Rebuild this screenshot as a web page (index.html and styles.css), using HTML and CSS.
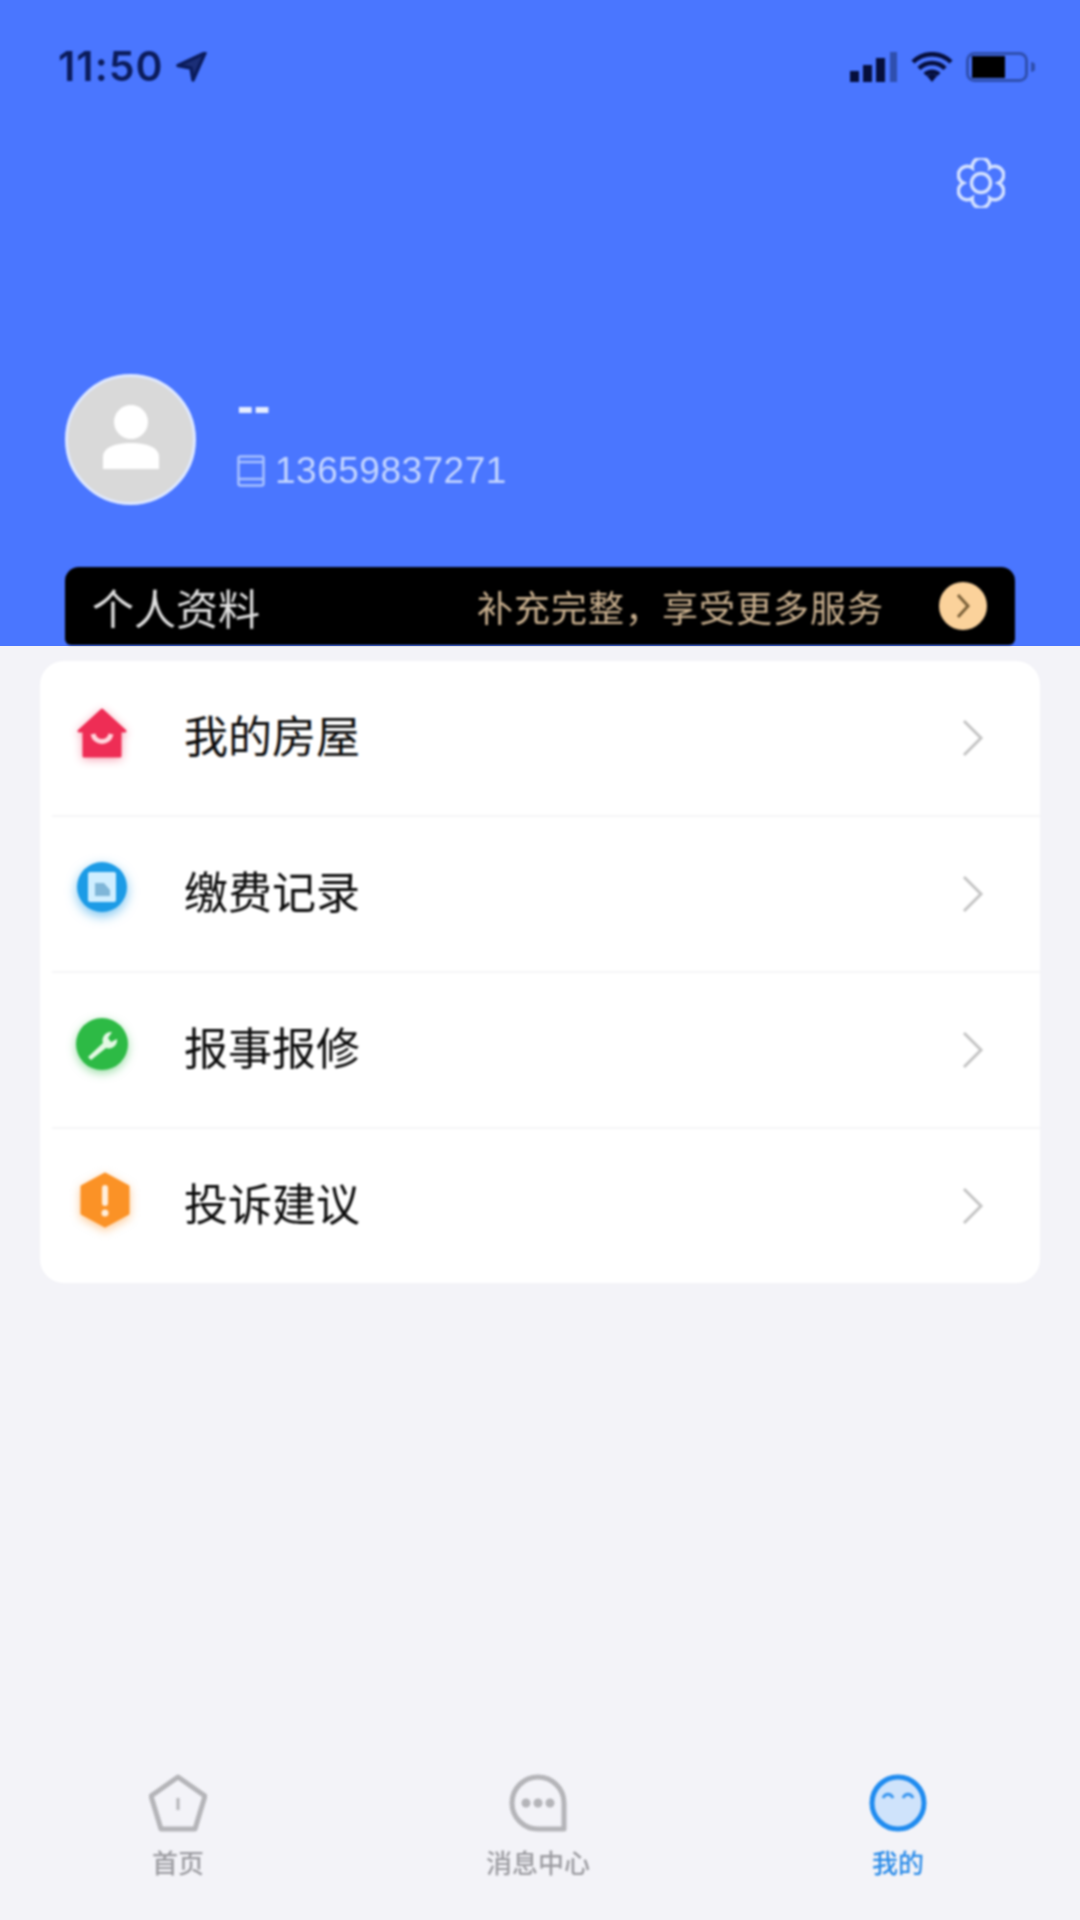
FILE: index.html
```html
<!DOCTYPE html>
<html lang="zh-CN">

<head>
    <meta charset="UTF-8">
    <title>我的</title>
    <link rel="stylesheet" href="styles.css">
</head>

<body>
    <div class="page">
        <div class="header">
            <div class="status">
                <div class="time">
                    <span>11:50</span>
                    <svg class="loc" viewBox="0 0 32 30"><path d="M30 1 3 13.500l13 2.500 2 12z" fill="#1c2f78" stroke="#0b1c5c" stroke-width="3.500" stroke-linejoin="round"/></svg>
                </div>
                <div class="status-icons">
                    <svg class="signal" viewBox="0 0 47 30">
                        <rect x="0" y="19" width="9" height="11" fill="#060f3c"/>
                        <rect x="13" y="13" width="9" height="17" fill="#060f3c"/>
                        <rect x="26" y="6" width="9" height="24" fill="#060f3c"/>
                        <rect x="40" y="0" width="7" height="30" fill="#2f4fae"/>
                    </svg>
                    <svg class="wifi" viewBox="0 0 42 30">
                        <path d="M2 10a27 27 0 0 1 38 0M8 16.500a18 18 0 0 1 26 0M14 22.500a10 10 0 0 1 14 0" fill="none" stroke="#060f3c" stroke-width="4.500"/>
                        <path d="M21 30l-5-6a7 7 0 0 1 10 0z" fill="#060f3c"/>
                    </svg>
                    <svg class="battery" viewBox="0 0 69 30">
                        <rect x="1.500" y="1.500" width="59" height="27" rx="7" fill="none" stroke="#2f4fae" stroke-width="3"/>
                        <rect x="6" y="4" width="33" height="22" fill="#000"/>
                        <path d="M65 10v10a5 5 0 0 0 0-10z" fill="#2f4fae"/>
                    </svg>
                </div>
            </div>
            <div class="tools">
                <svg class="gear" viewBox="0 0 48 50" fill="none" stroke="#d4e2ff" stroke-width="3.500">
                    <path d="M15.250 9.800A8.800 8.800 0 1 1 32.750 9.800 8.800 8.800 0 1 1 41.500 25 8.800 8.800 0 1 1 32.750 40.200 8.800 8.800 0 1 1 15.250 40.200 8.800 8.800 0 1 1 6.500 25 8.800 8.800 0 1 1 15.250 9.800z"/>
                    <circle cx="24" cy="25" r="9.500"/>
                </svg>
            </div>
            <div class="profile">
                <div class="avatar">
                    <svg class="avatar-man" viewBox="0 0 56 64">
                        <circle cx="28" cy="17" r="17" fill="#fff"/>
                        <path d="M0 64V52c0-9 11-14 28-14s28 5 28 14v12z" fill="#fff"/>
                    </svg>
                </div>
                <div class="who">
                    <div class="name">--</div>
                    <div class="phone">
                        <svg class="phone-icon" viewBox="0 0 28 32" fill="none" stroke="#a9c2ff" stroke-width="2.500">
                            <rect x="1.500" y="1.500" width="25" height="29" rx="2"/>
                            <path d="M1.500 7h25M1.500 24h25"/>
                        </svg>
                        <span>13659837271</span>
                    </div>
                </div>
            </div>
            <div class="banner">
                <span class="banner-title">个人资料</span>
                <span class="banner-tip">补充完整，享受更多服务</span>
                <span class="banner-go">
                    <svg viewBox="0 0 14 26"><path d="M2 2l10 11L2 24" fill="none" stroke="#7a6038" stroke-width="3"/></svg>
                </span>
            </div>
        </div>

        <div class="card">
            <div class="row">
                <svg class="row-icon" viewBox="0 0 60 60">
                    <path d="M30 6 7 27h5v25h36V27h5z" fill="#ee2d55" stroke="#ee2d55" stroke-width="3" stroke-linejoin="round"/>
                    <path d="M21 30c2 10 16 10 18 0" fill="none" stroke="#ffd5dc" stroke-width="5"/>
                </svg>
                <span class="row-name">我的房屋</span>
                <svg class="chevron" viewBox="0 0 22 38"><path d="M2 2l17 17L2 36" fill="none" stroke="#c4c4c4" stroke-width="3"/></svg>
            </div>
            <div class="row">
                <svg class="row-icon" viewBox="0 0 60 60">
                    <circle cx="30" cy="27" r="25" fill="#1c9be6"/>
                    <rect x="16" y="12" width="28" height="30" rx="2" fill="#cfeeff"/>
                    <path d="M23 23h9l6 7v6H23z" fill="#7fb6d8"/>
                </svg>
                <span class="row-name">缴费记录</span>
                <svg class="chevron" viewBox="0 0 22 38"><path d="M2 2l17 17L2 36" fill="none" stroke="#c4c4c4" stroke-width="3"/></svg>
            </div>
            <div class="row">
                <svg class="row-icon" viewBox="0 0 60 60">
                    <circle cx="30" cy="28" r="26" fill="#2dba45"/>
                    <path d="M16 41 31 27c-2-6 3-12 9-11l-4 6 3 4 6-3c1 6-5 11-11 9L19 44z" fill="#e4f9e4"/>
                </svg>
                <span class="row-name">报事报修</span>
                <svg class="chevron" viewBox="0 0 22 38"><path d="M2 2l17 17L2 36" fill="none" stroke="#c4c4c4" stroke-width="3"/></svg>
            </div>
            <div class="row">
                <svg class="row-icon row-icon-hex" viewBox="0 0 60 60">
                    <path d="M30 2 53 14.500v27L30 54 7 41.500v-27z" fill="#fb9226" stroke="#fb9226" stroke-width="3" stroke-linejoin="round"/>
                    <rect x="27" y="13" width="6" height="21" rx="3" fill="#ffeeda"/>
                    <circle cx="30" cy="41" r="3.500" fill="#ffeeda"/>
                </svg>
                <span class="row-name">投诉建议</span>
                <svg class="chevron" viewBox="0 0 22 38"><path d="M2 2l17 17L2 36" fill="none" stroke="#c4c4c4" stroke-width="3"/></svg>
            </div>
        </div>

        <div class="tabbar">
            <div class="tab">
                <svg class="tab-icon" viewBox="0 0 58 58" fill="none" stroke="#b4b4b8" stroke-width="5" stroke-linejoin="round">
                    <path d="M29 3 56 22 46 55H12L2 22z"/>
                    <path d="M29 24v12" stroke-width="3"/>
                </svg>
                <span>首页</span>
            </div>
            <div class="tab">
                <svg class="tab-icon" viewBox="0 0 58 58">
                    <path d="M29 3A26 26 0 0 1 55 29V55H29A26 26 0 0 1 29 3z" fill="none" stroke="#b4b4b8" stroke-width="5" stroke-linejoin="round"/>
                    <circle cx="17" cy="29" r="4.500" fill="#b4b4b8"/>
                    <circle cx="29" cy="29" r="4.500" fill="#b4b4b8"/>
                    <circle cx="41" cy="29" r="4.500" fill="#b4b4b8"/>
                </svg>
                <span>消息中心</span>
            </div>
            <div class="tab tab-on">
                <svg class="tab-icon" viewBox="0 0 58 58">
                    <circle cx="29" cy="29" r="26" fill="#cfe3fb" stroke="#1f8bef" stroke-width="5"/>
                    <path d="M14 24c2-5 8-5 10 0M34 24c2-5 8-5 10 0" fill="none" stroke="#3b97ef" stroke-width="3"/>
                </svg>
                <span>我的</span>
            </div>
        </div>
    </div>
</body>

</html>
```
FILE: styles.css
```css
* {
    box-sizing: border-box;
}

body {
    margin: 0;
    background-color: #f3f3f8;
    font-family: "Noto Sans CJK SC", sans-serif;
}

.page {
    width: 1080px;
    height: 1920px;
    display: flex;
    flex-direction: column;
}

/* the shot is a low-res upscale, so everything on it is slightly soft */
.status,
.tools,
.profile,
.banner,
.card,
.tabbar {
    filter: blur(0.8px);
}

.header {
    height: 646px;
    background-color: #4a76ff;
    padding: 48px 45px 0 58px;
    display: flex;
    flex-direction: column;
}

.status {
    height: 36px;
    display: flex;
    justify-content: space-between;
    align-items: center;
}

.time {
    display: flex;
    align-items: center;
    gap: 11px;
    font-family: Inter, sans-serif;
    font-weight: 600;
    font-size: 41px;
    letter-spacing: 1px;
    color: #0b1c5c;
}

.loc {
    width: 32px;
    height: 30px;
    margin-top: 2px;
}

.status-icons {
    display: flex;
    align-items: center;
    gap: 14px;
    margin-top: 2px;
}

.signal {
    width: 47px;
    height: 30px;
}

.wifi {
    width: 42px;
    height: 30px;
}

.battery {
    width: 69px;
    height: 30px;
    margin-left: -1px;
}

.tools {
    margin-top: 74px;
    padding-right: 30px;
    display: flex;
    justify-content: flex-end;
}

.gear {
    width: 48px;
    height: 50px;
}

.profile {
    margin-top: 166px;
    margin-left: 7px;
    display: flex;
    align-items: center;
    gap: 41px;
}

.avatar {
    width: 131px;
    height: 131px;
    border-radius: 50%;
    background-color: #d9d9d9;
    border: 3px solid #dfe9ff;
    display: flex;
    align-items: center;
    justify-content: center;
}

.avatar-man {
    width: 56px;
    height: 64px;
    margin-bottom: 6px;
}

.who {
    color: #c3d5ff;
}

.name {
    font-family: "Liberation Sans", sans-serif;
    font-size: 50px;
    line-height: 44px;
    font-weight: bold;
    color: #e6eeff;
    margin-top: -3px;
}

.phone {
    margin-top: 21px;
    display: flex;
    align-items: center;
    gap: 10px;
    font-family: "Liberation Sans", sans-serif;
    font-size: 37px;
    letter-spacing: 0.5px;
    line-height: 44px;
}

.phone-icon {
    width: 28px;
    height: 32px;
}

.banner {
    margin-top: 62px;
    margin-left: 7px;
    margin-right: 20px;
    height: 78px;
    background-color: #000;
    border-radius: 14px 14px 6px 6px;
    padding: 0 28px 0 27px;
    display: flex;
    align-items: center;
}

.banner-title {
    font-size: 42px;
    color: #e0e0e0;
    flex: 1;
}

.banner-tip {
    font-size: 36px;
    letter-spacing: 1px;
    color: #c8af8e;
}

.banner-go {
    width: 48px;
    height: 48px;
    margin-left: 55px;
    border-radius: 50%;
    background-color: #fbd29b;
    display: flex;
    align-items: center;
    justify-content: center;
}

.banner-go svg {
    width: 14px;
    height: 26px;
}

.card {
    margin: 15px 40px 0;
    height: 622px;
    background-color: #fff;
    border-radius: 24px;
    display: flex;
    flex-direction: column;
}

.row {
    flex: 1;
    margin-left: 12px;
    padding-right: 56px;
    padding-left: 20px;
    display: flex;
    align-items: center;
    border-bottom: 2px solid #f5f5f7;
}

.row:last-child {
    border-bottom: none;
}

.row-icon {
    width: 60px;
    height: 60px;
    margin-bottom: 8px;
}

.row:nth-child(1) .row-icon {
    filter: drop-shadow(0 2px 5px rgba(238, 45, 85, 0.45));
}

.row:nth-child(2) .row-icon {
    filter: drop-shadow(0 4px 6px rgba(28, 155, 230, 0.6));
}

.row:nth-child(3) .row-icon {
    filter: drop-shadow(0 3px 5px rgba(45, 186, 69, 0.5));
}

.row:nth-child(4) .row-icon {
    margin-left: 3px;
    margin-right: -3px;
    filter: drop-shadow(0 3px 5px rgba(251, 146, 38, 0.5));
}

.row-name {
    flex: 1;
    margin-left: 52px;
    margin-bottom: 9px;
    font-size: 44px;
    color: #0c0c0c;
}

.chevron {
    width: 22px;
    height: 38px;
}

.tabbar {
    margin-top: auto;
    height: 146px;
    padding-left: 58px;
    padding-right: 62px;
    display: flex;
    justify-content: space-between;
}

.tab {
    width: 240px;
    display: flex;
    flex-direction: column;
    align-items: center;
    font-size: 26px;
    font-weight: 500;
    color: #9c9ca1;
}

.tab-icon {
    width: 58px;
    height: 58px;
    margin-bottom: 12px;
}

.tab span {
    line-height: 36px;
}

.tab-on {
    color: #2a8be8;
}
```
